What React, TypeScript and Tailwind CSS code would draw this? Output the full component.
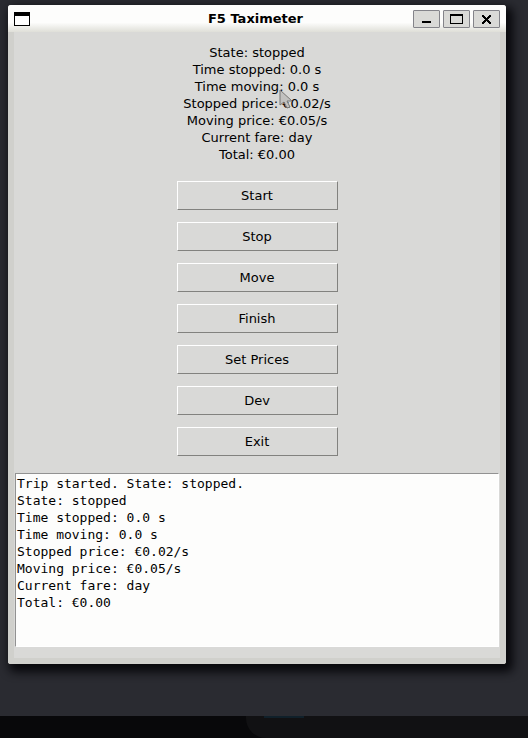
import type { ReactNode } from "react";

const status = [
  "State: stopped",
  "Time stopped: 0.0 s",
  "Time moving: 0.0 s",
  "Stopped price: €0.02/s",
  "Moving price: €0.05/s",
  "Current fare: day",
  "Total: €0.00",
];

const actions = ["Start", "Stop", "Move", "Finish", "Set Prices", "Dev", "Exit"];

const log = ["Trip started. State: stopped.", ...status].join("\n");

function WindowButton({ label, children }: { label: string; children: ReactNode }) {
  return (
    <button
      type="button"
      aria-label={label}
      className="flex h-[18px] w-[27px] items-center justify-center rounded-[1px] border border-[#84848a] bg-[#dadad7]"
    >
      <svg width="13" height="10" viewBox="0 0 13 10" shapeRendering="crispEdges" aria-hidden="true">
        {children}
      </svg>
    </button>
  );
}

function Pointer() {
  return (
    <svg
      width="15"
      height="21"
      viewBox="0 0 15 21"
      className="pointer-events-none absolute top-[45px] left-[96px]"
      aria-hidden="true"
    >
      <path d="M1 1v15l4-3 3 6 3-1-3-6h5z" fill="#c2c1bf" stroke="#777674" />
    </svg>
  );
}

export default function App() {
  return (
    <div className="flex min-h-screen flex-col bg-[#2a2b31] font-['DejaVu_Sans',sans-serif] text-[13px] leading-[17px] text-black">
      <main className="mt-[5px] mr-[22px] ml-2 flex flex-col overflow-hidden rounded-[3px] bg-[#d9d9d7] shadow-[4px_5px_10px_3px_#08080c]">
        <header className="flex h-[27px] items-center bg-linear-to-b from-[#fdfdfc] from-65% to-[#dfdfd8] px-[6px]">
          <div className="flex w-[84px]">
            <svg width="16" height="14" viewBox="0 0 16 14" shapeRendering="crispEdges" aria-hidden="true">
              <path d="M0 0h16v14H0z" />
              <path d="M1 4h14v9H1z" fill="#fff" />
            </svg>
          </div>
          <h1 className="flex-1 text-center font-bold">F5 Taximeter</h1>
          <div className="flex gap-[3px]">
            <WindowButton label="Minimize">
              <path d="M2 7h9v2H2z" />
            </WindowButton>
            <WindowButton label="Maximize">
              <path d="M0 0h13v10H0zM1 2v7h11V2z" fillRule="evenodd" />
            </WindowButton>
            <WindowButton label="Close">
              <path d="M2 1h2v1h1v1h1v1h1V3h1V2h1V1h2v2h-1v1H9v1H8v1h1v1h1v1h1v2H9V9H8V8H7V7H6v1H5v1H4v1H2V8h1V7h1V6h1V5H4V4H3V3H2z" />
            </WindowButton>
          </div>
        </header>

        <section className="flex flex-col items-center border-x-[6px] border-b-[6px] border-[#d0d0cc] px-px pt-3 pb-[11px]">
          <div className="relative text-center">
            {status.map((line) => (
              <p key={line}>{line}</p>
            ))}
            <Pointer />
          </div>
          <div className="mt-[18px] mb-[17px] flex w-[161px] flex-col gap-3">
            {actions.map((name) => (
              <button
                key={name}
                type="button"
                className="h-[29px] border border-t-white border-r-[#82827f] border-b-[#82827f] border-l-white"
              >
                {name}
              </button>
            ))}
          </div>
          <textarea
            aria-label="Trip log"
            defaultValue={log}
            spellCheck={false}
            className="block h-[174px] w-full resize-none border border-t-[#929292] border-r-white border-b-white border-l-[#929292] bg-[#fdfdfc] p-px font-['DejaVu_Sans_Mono',monospace] outline-none"
          />
        </section>
      </main>
      <footer className="mt-auto flex h-[22px] justify-end bg-[#08080a]">
        <div className="w-[282px] rounded-bl-[20px] bg-[#111113]">
          <div className="ml-[18px] h-[2px] w-10 bg-[#10202a]" />
        </div>
      </footer>
    </div>
  );
}
